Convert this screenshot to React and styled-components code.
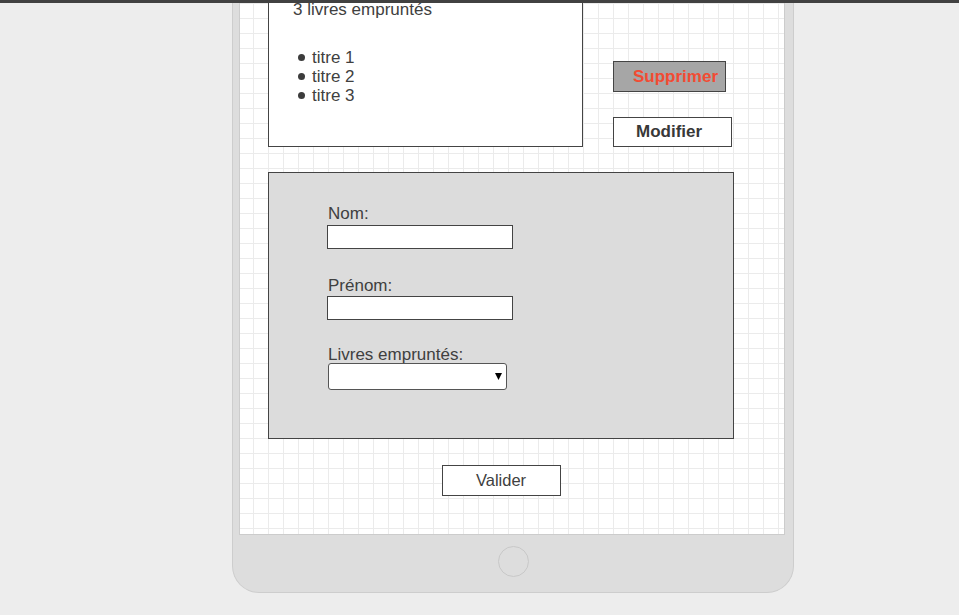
import React from 'react';
import styled, { createGlobalStyle } from 'styled-components';

const GlobalStyle = createGlobalStyle`
  html, body {
    margin: 0;
    padding: 0;
    background: #ededed;
  }
  body {
    font-family: "Liberation Sans", Arial, sans-serif;
    color: #404040;
  }
`;

const TopBar = styled.div`
  height: 3px;
  background: #414141;
`;

const Device = styled.div`
  box-sizing: border-box;
  width: 562px;
  margin-left: 232px;
  padding: 0 8px 0 6px;
  background: #dddddd;
  border: 1px solid #cdcdcd;
  border-top: none;
  border-radius: 0 0 27px 27px;
`;

const Screen = styled.div`
  box-sizing: border-box;
  height: 532px;
  padding-left: 28px;
  overflow: hidden;
  background-color: #ffffff;
  background-image:
    linear-gradient(to right, #ebebeb 1px, transparent 1px),
    linear-gradient(to bottom, #ebebeb 1px, transparent 1px);
  background-size: 15px 15px;
  background-position: 13px 0;
  border: 1px solid #cccccc;
  border-top: none;
`;

const Column = styled.div`
  width: 466px;
  display: flex;
  flex-direction: column;
`;

const TopRow = styled.div`
  display: flex;
  align-items: flex-end;
  gap: 30px;
`;

const BorrowedBox = styled.div`
  box-sizing: border-box;
  width: 315px;
  margin-top: -20px;
  padding: 16px 0 41px 24px;
  background: #ffffff;
  border: 1px solid #444444;
`;

const BoxTitle = styled.div`
  font-size: 17px;
  line-height: 19px;
`;

const TitleList = styled.ul`
  list-style: none;
  margin: 29px 0 0 5px;
  padding: 0;
`;

const TitleItem = styled.li`
  display: flex;
  align-items: center;
  font-size: 17px;
  line-height: 19px;
`;

const Bullet = styled.span`
  width: 7px;
  height: 7px;
  margin-right: 7px;
  border-radius: 50%;
  background: #3c3c3c;
`;

const ButtonColumn = styled.div`
  display: flex;
  flex-direction: column;
  align-items: flex-start;
  gap: 25px;
`;

const ActionButton = styled.button`
  box-sizing: border-box;
  display: flex;
  align-items: center;
  width: ${(p) => p.$w}px;
  height: ${(p) => p.$h}px;
  margin: 0;
  padding: 0 0 0 ${(p) => p.$pl}px;
  background: ${(p) => p.$bg};
  color: ${(p) => p.$color};
  border: 1px solid #444444;
  border-radius: 0;
  font-family: "Liberation Sans", Arial, sans-serif;
  font-size: 17px;
  font-weight: bold;
  cursor: pointer;
`;

const FormPanel = styled.div`
  box-sizing: border-box;
  height: 267px;
  margin-top: 25px;
  padding: 31px 0 0 58px;
  background: #dcdcdc;
  border: 1px solid #444444;
`;

const Field = styled.div`
  display: flex;
  flex-direction: column;
  align-items: flex-start;
  margin-top: ${(p) => p.$top || 0}px;
`;

const Label = styled.label`
  font-size: 17px;
  line-height: 19px;
  margin: 0 0 ${(p) => p.$gap}px 1px;
  color: #404040;
`;

const TextInput = styled.input`
  box-sizing: border-box;
  width: 186px;
  height: 24px;
  margin: 0;
  padding: 0 4px;
  background: #ffffff;
  border: 1px solid #444444;
  border-radius: 0;
  outline: none;
  font-family: "Liberation Sans", Arial, sans-serif;
  font-size: 14px;
`;

const SelectBox = styled.div`
  position: relative;
  box-sizing: border-box;
  width: 179px;
  height: 27px;
  margin-left: 1px;
  background: #ffffff;
  border: 1px solid #555555;
  border-radius: 3px;
`;

const SelectArrow = styled.svg`
  position: absolute;
  right: 4px;
  top: 9px;
`;

const SubmitButton = styled.button`
  box-sizing: border-box;
  align-self: center;
  width: 119px;
  height: 31px;
  margin-top: 26px;
  padding: 0;
  background: #ffffff;
  color: #404040;
  border: 1px solid #444444;
  border-radius: 0;
  font-family: "Liberation Sans", Arial, sans-serif;
  font-size: 16.5px;
  cursor: pointer;
`;

const HomeArea = styled.div`
  height: 57px;
  padding-top: 11px;
  box-sizing: border-box;
  display: flex;
  justify-content: center;
`;

const HomeButton = styled.div`
  box-sizing: border-box;
  width: 31px;
  height: 31px;
  margin-left: 2px;
  border: 1px solid #c8c8c8;
  border-radius: 50%;
`;

const titres = ['titre 1', 'titre 2', 'titre 3'];

const App = () => {
  return (
    <>
      <GlobalStyle />
      <TopBar />
      <Device>
        <Screen>
          <Column>
            <TopRow>
              <BorrowedBox>
                <BoxTitle>3 livres empruntés</BoxTitle>
                <TitleList>
                  {titres.map((t) => (
                    <TitleItem key={t}>
                      <Bullet />
                      {t}
                    </TitleItem>
                  ))}
                </TitleList>
              </BorrowedBox>
              <ButtonColumn>
                <ActionButton $w={113} $h={31} $pl={19} $bg="#a6a6a6" $color="#f24b33">
                  Supprimer
                </ActionButton>
                <ActionButton $w={119} $h={30} $pl={22} $bg="#ffffff" $color="#383838">
                  Modifier
                </ActionButton>
              </ButtonColumn>
            </TopRow>

            <FormPanel>
              <Field>
                <Label $gap={2}>Nom:</Label>
                <TextInput type="text" />
              </Field>
              <Field $top={27}>
                <Label $gap={1}>Prénom:</Label>
                <TextInput type="text" />
              </Field>
              <Field $top={25}>
                <Label $gap={-1}>Livres empruntés:</Label>
                <SelectBox>
                  <SelectArrow width="7" height="7" viewBox="0 0 7 7">
                    <polygon points="0,0 7,0 3.5,7" fill="#000" />
                  </SelectArrow>
                </SelectBox>
              </Field>
            </FormPanel>

            <SubmitButton type="button">Valider</SubmitButton>
          </Column>
        </Screen>
        <HomeArea>
          <HomeButton />
        </HomeArea>
      </Device>
    </>
  );
};

export default App;
